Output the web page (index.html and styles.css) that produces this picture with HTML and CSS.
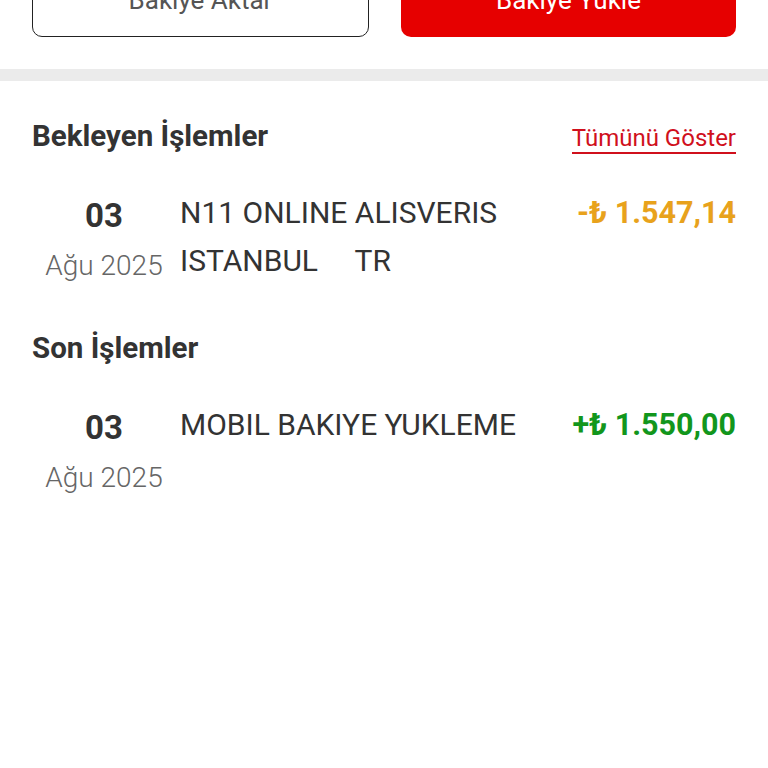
FILE: index.html
```html
<!DOCTYPE html>
<html lang="tr">

<head>
    <meta charset="UTF-8">
    <meta name="viewport" content="width=device-width, initial-scale=1.0">
    <title>Hesap Hareketleri</title>
    <link rel="stylesheet" href="styles.css">
</head>

<body>
    <div class="actions">
        <button class="btn btn-outline">Bakiye Aktar</button>
        <button class="btn btn-red">Bakiye Yükle</button>
    </div>

    <div class="divider"></div>

    <div class="content">
        <div class="section-head">
            <h2>Bekleyen İşlemler</h2>
            <a href="#" class="show-all">Tümünü Göster</a>
        </div>

        <div class="tx">
            <div class="tx-date">
                <span class="day">03</span>
                <span class="month">Ağu 2025</span>
            </div>
            <div class="tx-desc">N11 ONLINE ALISVERIS<br>ISTANBUL&nbsp;&nbsp;&nbsp;&nbsp; TR</div>
            <div class="tx-amount pending">-₺ 1.547,14</div>
        </div>

        <div class="section-head">
            <h2>Son İşlemler</h2>
        </div>

        <div class="tx">
            <div class="tx-date">
                <span class="day">03</span>
                <span class="month">Ağu 2025</span>
            </div>
            <div class="tx-desc">MOBIL BAKIYE YUKLEME</div>
            <div class="tx-amount income">+₺ 1.550,00</div>
        </div>
    </div>
</body>

</html>
```

FILE: styles.css
```css
body {
    margin: 0;
    font-family: Roboto, "Open Sans", sans-serif;
    color: #333;
    background: #fff;
}

.actions {
    display: flex;
    gap: 32px;
    padding: 0 32px;
    margin-top: -37px;
}

.btn {
    flex: 1;
    height: 74px;
    font-family: inherit;
    font-size: 26px;
    border-radius: 10px;
    cursor: pointer;
}

.btn-outline {
    background: #fff;
    color: #555;
    border: 1.5px solid #222;
}

.btn-red {
    background: #e60000;
    color: #fff;
    border: none;
}

.divider {
    height: 12px;
    margin-top: 32px;
    background: #ebebeb;
}

.content {
    padding: 35px 32px 0;
}

.section-head {
    display: flex;
    justify-content: space-between;
    align-items: baseline;
    margin-bottom: 33px;
}

.section-head h2 {
    margin: 0;
    font-size: 29.5px;
    line-height: 40px;
    font-weight: 700;
    color: #333;
}

.show-all {
    font-size: 24px;
    color: #d0101c;
    text-decoration: none;
    border-bottom: 2px solid #d0101c;
    line-height: 27px;
}

.tx {
    display: grid;
    grid-template-columns: 144px 1fr auto;
    column-gap: 4px;
    margin-bottom: 39px;
}

.tx-date {
    display: flex;
    flex-direction: column;
    align-items: center;
}

.day {
    font-size: 33px;
    font-weight: 700;
    line-height: 54px;
}

.month {
    font-size: 28px;
    font-weight: 300;
    line-height: 46px;
    color: #666;
}

.tx-desc {
    font-size: 30px;
    line-height: 48px;
    color: #333;
}

.tx-amount {
    font-size: 30.5px;
    font-weight: 700;
    line-height: 48px;
}

.pending {
    color: #e8a21c;
}

.income {
    color: #12961c;
}
```
